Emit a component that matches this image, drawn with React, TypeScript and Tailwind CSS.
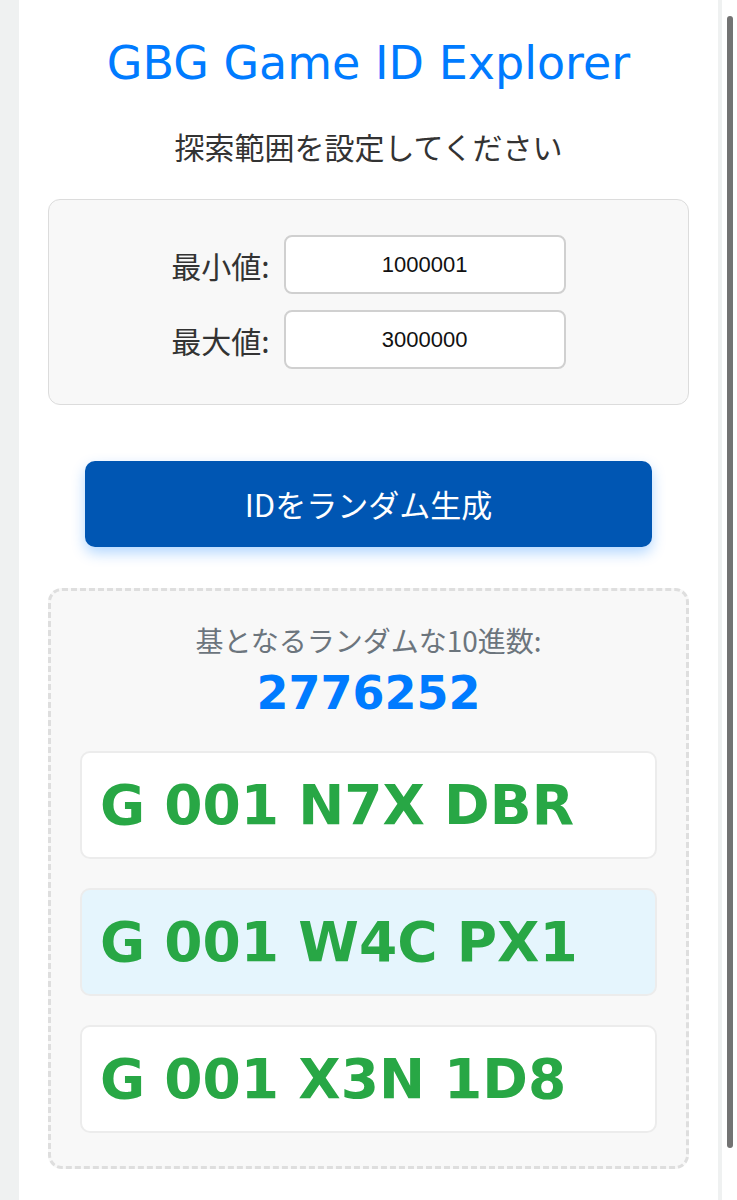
import React from "react";

const ids = [
  { code: "G 001 N7X DBR", active: false },
  { code: "G 001 W4C PX1", active: true },
  { code: "G 001 X3N 1D8", active: false },
];

const jp = "font-['Noto_Sans_CJK_JP',sans-serif]";

export default function App() {
  return (
    <div className="flex h-[1200px] w-[737px] overflow-hidden bg-[#eff1f1]">
      <div className="w-[19px] shrink-0" />
      <main className={`flex w-[699px] shrink-0 flex-col items-center bg-white px-[29px] ${jp}`}>
        <h1 className="mt-[36px] font-['DejaVu_Sans',sans-serif] text-[46px] leading-[54px] text-[#007bff]">
          GBG Game ID Explorer
        </h1>
        <p className="mt-[36px] text-[30px] leading-[40px] text-[#333]">探索範囲を設定してください</p>

        <section className="mt-[33px] flex h-[206px] w-full flex-col items-center justify-center gap-[16px] rounded-[12px] border border-[#dcdcdc] bg-[#f8f8f8]">
          {[
            ["最小値:", "1000001"],
            ["最大値:", "3000000"],
          ].map(([label, value]) => (
            <div key={label} className="flex items-center gap-[14px]">
              <span className="text-[30px] leading-[40px] text-[#333]">{label}</span>
              <div className="flex h-[59px] w-[282px] items-center justify-center rounded-[8px] border-2 border-[#d0d0d0] bg-white font-['Liberation_Sans',sans-serif] text-[22px] text-[#111]">
                {value}
              </div>
            </div>
          ))}
        </section>

        <button className="mt-[56px] flex h-[86px] w-[567px] shrink-0 items-center justify-center rounded-[10px] bg-[#0056b3] text-[31px] text-white shadow-[0_6px_14px_rgba(0,123,255,0.3)]">
          IDをランダム生成
        </button>

        <section className="mt-[41px] flex h-[581px] w-full shrink-0 flex-col items-center rounded-[14px] border-[3px] border-dashed border-[#dedede] bg-[#f8f8f8] px-[29px]">
          <p className="mt-[30px] text-[28px] leading-[38px] text-[#6c757d]">基となるランダムな10進数:</p>
          <p className="mt-[9px] font-['DejaVu_Sans',sans-serif] text-[46px] font-bold leading-[50px] text-[#007bff]">
            2776252
          </p>
          <div className="mt-[33px] flex w-full flex-col gap-[29px]">
            {ids.map((id) => (
              <div
                key={id.code}
                className={`flex h-[108px] items-center rounded-[10px] border-2 border-[#ececec] px-[18px] font-['DejaVu_Sans',sans-serif] text-[55px] font-bold text-[#28a745] ${
                  id.active ? "bg-[#e5f5fd]" : "bg-white"
                }`}
              >
                {id.code}
              </div>
            ))}
          </div>
        </section>
      </main>
      <div className="w-[4px] shrink-0" />
      <div className="flex w-[15px] shrink-0 justify-center bg-white pt-[16px]">
        <div className="h-[1132px] w-[6px] rounded-full bg-[#737373]" />
      </div>
    </div>
  );
}
